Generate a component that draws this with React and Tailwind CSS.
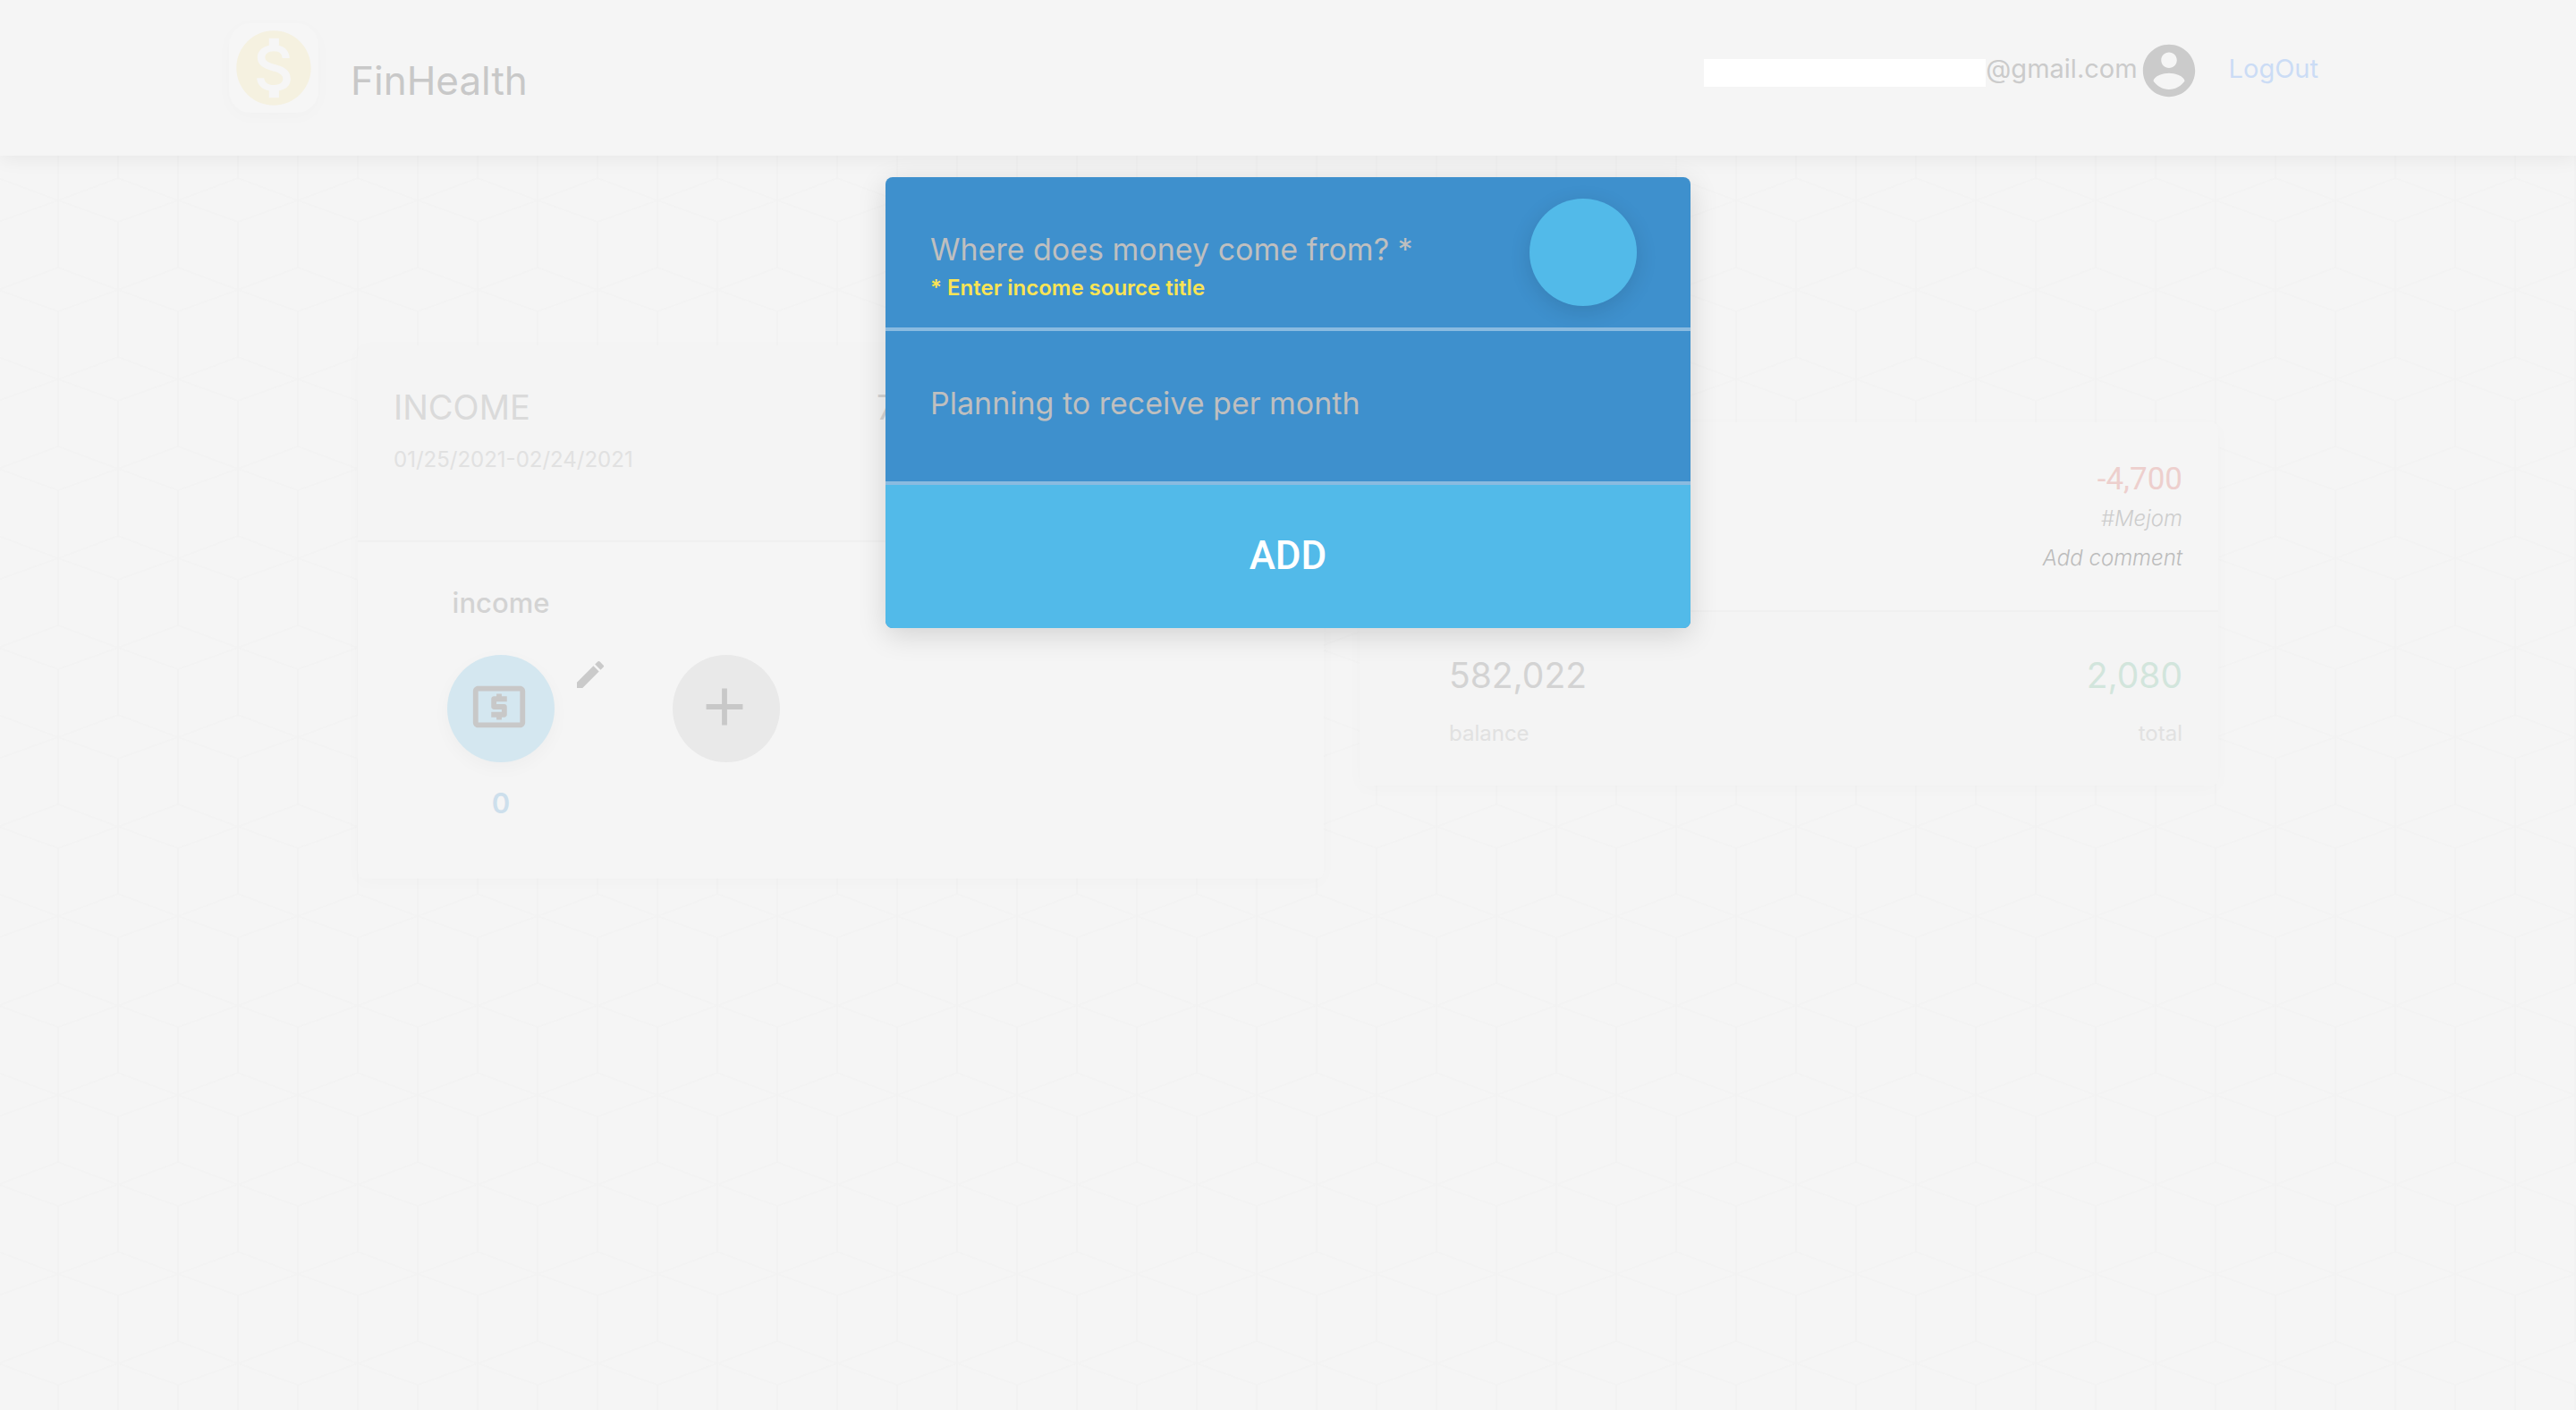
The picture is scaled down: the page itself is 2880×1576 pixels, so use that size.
import { MdMonetizationOn, MdLocalAtm, MdAdd, MdEdit } from "react-icons/md";

function CubePattern() {
  return (
    <svg className="absolute inset-0 h-full w-full" aria-hidden="true">
      <defs>
        <pattern id="cubes" width="134" height="200" patternUnits="userSpaceOnUse" patternTransform="translate(65 24)">
          <g fill="none" strokeWidth="2">
            <path stroke="#f3f3f3" d="M0 0L67 -25L134 0L67 24ZM0 200L67 175L134 200L67 224Z" />
            <path stroke="#f3f3f3" d="M-67 100L0 75L67 100L0 124ZM67 100L134 75L201 100L134 124Z" />
            <path stroke="#f2f2f2" d="M0 -76V76M134 -76V76M0 124V276M134 124V276M67 24V176" />
          </g>
        </pattern>
      </defs>
      <rect width="100%" height="100%" fill="url(#cubes)" />
    </svg>
  );
}

function AccountIcon({ className }) {
  return (
    <svg viewBox="0 0 24 24" fill="currentColor" className={className} aria-hidden="true">
      <path d="M12 2C6.48 2 2 6.48 2 12s4.48 10 10 10 10-4.48 10-10S17.52 2 12 2zm0 3c1.66 0 3 1.34 3 3s-1.34 3-3 3-3-1.34-3-3 1.34-3 3-3zm0 14.2c-2.5 0-4.71-1.28-6-3.22.03-1.99 4-3.08 6-3.08 1.99 0 5.97 1.09 6 3.08-1.29 1.94-3.5 3.22-6 3.22z" />
    </svg>
  );
}

function Header() {
  return (
    <header className="relative flex h-[174px] justify-between bg-[#f5f5f5] px-64 shadow-[0_4px_20px_rgba(0,0,0,0.06)]">
      <div className="flex items-start gap-9 pt-[26px]">
        <div className="flex size-[100px] items-center justify-center rounded-[24px] bg-[#f6f6f6] shadow-[0_4px_20px_rgba(0,0,0,0.02)]">
          <MdMonetizationOn className="size-[100px] text-[#f5f1e0]" />
        </div>
        <h1 className="pt-[34px] text-[44px] leading-[60px] text-[#c8c8c8]">FinHealth</h1>
      </div>
      <div className="flex h-[158px] items-center">
        <div className="mt-1 h-[31px] w-[315px] bg-white" />
        <span className="pb-1 text-[29px] leading-10 text-[#cbcbcb]">@gmail.com</span>
        <AccountIcon className="size-[70px] text-[#cbcbcb]" />
        <a href="#logout" className="mx-8 pb-1 text-[29px] leading-10 text-[#cbdcf5]">
          LogOut
        </a>
      </div>
    </header>
  );
}

function IncomeCard() {
  return (
    <section className="flex w-[1080px] flex-col overflow-hidden rounded-lg bg-[#f5f5f5] shadow-[0_4px_20px_rgba(0,0,0,0.02)]">
      <div className="grid h-[220px] grid-cols-2 border-b-2 border-[#f0f0f0] bg-[#f4f4f4] pt-11">
        <div className="px-10">
          <h2 className="text-[38px] leading-[50px] text-[#dadada]">INCOME</h2>
          <p className="mt-[18px] text-[24px] leading-8 text-[#e1e1e1]">01/25/2021-02/24/2021</p>
        </div>
        <p className="px-10 text-[38px] leading-[50px] text-[#d4d4d4]">7,000</p>
      </div>
      <div className="flex h-[376px] gap-3 px-10 pt-12">
        <div className="relative flex w-[240px] flex-col items-center">
          <h3 className="text-[31px] font-medium leading-10 text-[#d3d3d3]">income</h3>
          <button
            aria-label="Open income"
            className="mt-[38px] flex size-[120px] items-start rounded-full bg-[#d4e7f0] p-[23px] shadow-[0_6px_20px_rgba(0,0,0,0.03)]"
          >
            <MdLocalAtm className="size-[70px] shrink-0 text-[#c8c8c8]" />
          </button>
          <p className="mt-[26px] text-[31px] font-semibold leading-10 text-[#cddfec]">0</p>
          <button aria-label="Edit income" className="absolute right-0 top-20">
            <MdEdit className="size-10 text-[#cacaca]" />
          </button>
        </div>
        <div className="flex w-[240px] flex-col items-center pt-[78px]">
          <button aria-label="Add income source" className="flex size-[120px] items-start rounded-full bg-[#e9e9e9] p-[23px]">
            <MdAdd className="size-[70px] shrink-0 text-[#c8c8c8]" />
          </button>
        </div>
      </div>
    </section>
  );
}

function BalanceCard() {
  return (
    <section className="mt-[86px] flex flex-1 flex-col self-start overflow-hidden rounded-lg bg-[#f5f5f5] shadow-[0_4px_20px_rgba(0,0,0,0.02)]">
      <div className="flex h-[212px] flex-col items-end border-b-2 border-[#f0f0f0] px-10 pt-11">
        <p className="font-[Roboto,sans-serif] text-[35px] leading-10 text-[#edcfcd]">-4,700</p>
        <p className="mt-1 text-[24px] font-light italic leading-10 text-[#cdcdcd]">#Mejom</p>
        <button className="mt-1 text-[24px] font-light italic leading-10 text-[#bcbcbc]">Add comment</button>
      </div>
      <div className="flex h-[194px] justify-between bg-[#f4f4f4] pl-[100px] pr-10 pt-[46px]">
        <div>
          <p className="text-[39px] leading-[50px] text-[#d3d3d3]">582,022</p>
          <p className="mt-6 text-[24px] leading-8 text-[#e1e1e1]">balance</p>
        </div>
        <div className="text-right">
          <p className="text-[39px] leading-[50px] text-[#d2e5dc]">2,080</p>
          <p className="mt-6 text-[24px] leading-8 text-[#e1e1e1]">total</p>
        </div>
      </div>
    </section>
  );
}

function AddIncomeDialog() {
  return (
    <form
      role="dialog"
      aria-label="Add income source"
      className="absolute left-1/2 top-[198px] w-[900px] -translate-x-1/2 overflow-hidden rounded-lg bg-[#3e90cd] shadow-[0_8px_32px_rgba(0,0,0,0.14)]"
    >
      <div className="flex h-[172px] items-start justify-between border-b-4 border-[#8abbe0] pl-[50px] pr-[60px] pt-6">
        <div className="flex flex-1 flex-col pt-8">
          <input
            aria-label="Income source title"
            placeholder="Where does money come from? *"
            className="h-12 w-full bg-transparent text-[34px] outline-none placeholder:text-[#bfbfbf]"
          />
          <p className="mt-1 text-[24px] font-semibold leading-8 text-[#fae455]">* Enter income source title</p>
        </div>
        <button type="button" aria-label="Choose icon" className="size-[120px] rounded-full bg-[#52bae9] shadow-[0_6px_24px_rgba(0,0,0,0.12)]" />
      </div>
      <div className="h-[172px] border-b-4 border-[#8abbe0] px-[50px] pt-14">
        <input
          aria-label="Planned monthly income"
          placeholder="Planning to receive per month"
          className="h-12 w-full bg-transparent text-[34px] outline-none placeholder:text-[#bfbfbf]"
        />
      </div>
      <button type="submit" className="block h-40 w-full bg-[#52bae9] pb-0.5 font-[Roboto,sans-serif] text-[44px] font-medium text-white">
        ADD
      </button>
    </form>
  );
}

export default function App() {
  return (
    <div className="relative min-h-screen bg-[#f5f5f5] font-[Inter,sans-serif]">
      <CubePattern />
      <Header />
      <main className="relative flex items-start gap-10 px-[400px] pt-[212px]">
        <IncomeCard />
        <BalanceCard />
      </main>
      <AddIncomeDialog />
    </div>
  );
}
